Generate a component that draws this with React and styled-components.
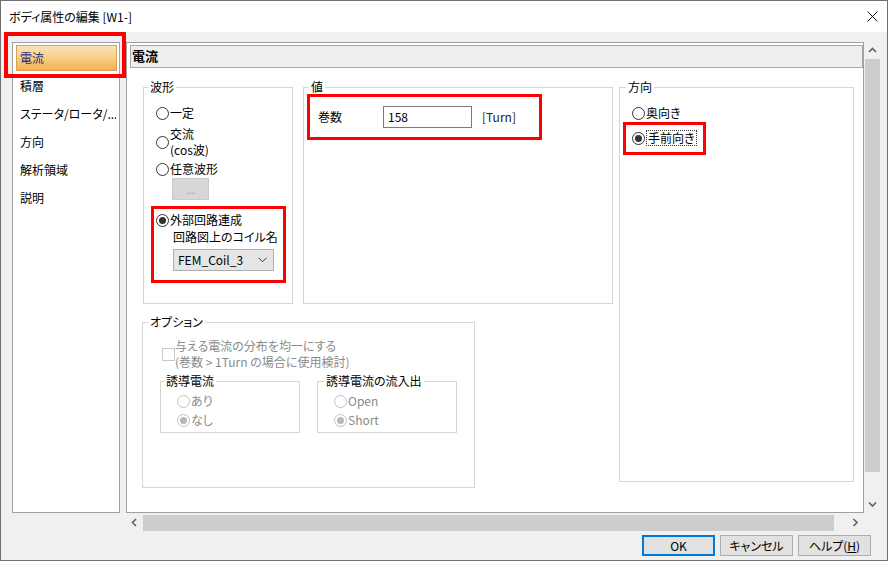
import React from 'react';
import styled, { createGlobalStyle } from 'styled-components';

const FONT = `"Noto Sans CJK JP", "Noto Sans", sans-serif`;

const Global = createGlobalStyle`
  html, body { margin: 0; padding: 0; background: #f0f0f0; }
  body {
    font-family: ${FONT};
    font-size: 12px;
    color: #000;
    font-feature-settings: "palt";
  }
  * { box-sizing: border-box; }
`;

const Window = styled.div`
  position: relative;
  width: 888px;
  height: 561px;
  border: 1px solid #707070;
  background: #f0f0f0;
  display: flex;
  flex-direction: column;
  overflow: hidden;
`;

const TitleBar = styled.div`
  height: 31px;
  background: #fff;
  display: flex;
  align-items: center;
  justify-content: space-between;
  padding-left: 8px;
  flex-shrink: 0;
`;

const TitleText = styled.span`
  font-size: 12px;
  line-height: 16px;
`;

const CloseGlyph = styled.span`
  display: flex;
  margin-right: 9px;
`;

const Body = styled.div`
  flex: 1;
  display: flex;
  flex-direction: column;
  padding: 10px 6px 4px 11px;
`;

const MainRow = styled.div`
  display: flex;
  gap: 6px;
`;

const Sidebar = styled.div`
  width: 108px;
  height: 471px;
  background: #fff;
  border: 1px solid #a0a0a0;
  padding: 2px 2px 0 3px;
  display: flex;
  flex-direction: column;
  gap: 2px;
`;

const SideItem = styled.div`
  height: 26px;
  line-height: 24px;
  padding-left: 3px;
  white-space: nowrap;
  overflow: hidden;
  border: 1px solid ${p => (p.$active ? '#d2a45c' : 'transparent')};
  background: ${p =>
    p.$active
      ? 'linear-gradient(to bottom, #fbe2b6 0%, #f9d394 40%, #f6bf66 75%, #f4b455 100%)'
      : 'transparent'};
  color: ${p => (p.$active ? '#1c2b78' : '#000')};
`;

const Annotation = styled.div`
  position: absolute;
  left: 3px;
  top: 31px;
  width: 122px;
  height: 46px;
  border: 4px solid #ff0000;
  pointer-events: none;
`;

const ScrollArea = styled.div`
  display: grid;
  grid-template-columns: 738px 17px;
  grid-template-rows: 471px 17px;
  row-gap: 1px;
`;

const Panel = styled.div`
  background: #fff;
  border: 1px solid #a0a0a0;
  display: flex;
  flex-direction: column;
  overflow: hidden;
`;

const HeaderBar = styled.div`
  margin: 2px 0 0 3px;
  height: 23px;
  border: 1px solid #a4aaaa;
  background: #eeeeee;
  font-weight: bold;
  font-size: 13px;
  line-height: 20px;
  padding-left: 1px;
`;

const Content = styled.div`
  display: flex;
  align-items: flex-start;
  padding: 11px 0 0 16px;
`;

const LeftColumn = styled.div`
  display: flex;
  flex-direction: column;
`;

const TopRow = styled.div`
  display: flex;
  gap: 10px;
`;

const GroupBox = styled.fieldset`
  margin: ${p => p.$m || '0'};
  padding: 0;
  min-width: 0;
  width: ${p => p.$w}px;
  height: ${p => p.$h}px;
  border: 1px solid #d6d6d6;
`;

const Legend = styled.legend`
  margin-left: ${p => (p.$ml != null ? p.$ml : 5)}px;
  padding: 0 2px;
  font-size: 12px;
  line-height: 16px;
  color: #000;
`;

const GroupInner = styled.div`
  display: flex;
  flex-direction: column;
  align-items: flex-start;
  padding: ${p => p.$pad};
`;

const RadioRow = styled.div`
  display: flex;
  align-items: center;
  line-height: ${p => p.$lh || 14}px;
  margin-left: ${p => p.$ml || 0}px;
  margin-top: ${p => p.$mt || 0}px;
  color: ${p => (p.$disabled ? '#8a8a8a' : '#000')};
  white-space: nowrap;
`;

const RadioCircle = styled.span`
  width: 13px;
  height: 13px;
  border-radius: 50%;
  border: 1px solid ${p => (p.$disabled ? '#c2c2c2' : '#333')};
  background: #fff;
  display: flex;
  align-items: center;
  justify-content: center;
  flex-shrink: 0;
  margin-right: 1px;
`;

const RadioDot = styled.span`
  width: 7px;
  height: 7px;
  border-radius: 50%;
  background: ${p => (p.$disabled ? '#b8b8b8' : '#333')};
`;

const Radio = ({ checked, disabled }) => (
  <RadioCircle $disabled={disabled}>
    {checked && <RadioDot $disabled={disabled} />}
  </RadioCircle>
);

const FocusLabel = styled.span`
  border: 1px dotted #333;
  padding: 0 1px;
  line-height: 14px;
`;

const EllipsisButton = styled.div`
  width: 37px;
  height: 22px;
  margin: 2px 0 0 21px;
  background: #d7d7d7;
  border: 1px solid #cbcbcb;
  color: #9a9a9a;
  text-align: center;
  line-height: 20px;
  font-size: 11px;
`;

const RedBox = styled.div`
  border: 3px solid #ff0000;
  display: flex;
  flex-direction: ${p => p.$dir || 'column'};
  align-items: ${p => p.$align || 'flex-start'};
  width: ${p => (p.$w ? `${p.$w}px` : 'auto')};
  height: ${p => (p.$h ? `${p.$h}px` : 'auto')};
  margin-top: ${p => p.$mt || 0}px;
  padding: ${p => p.$pad};
`;

const PlainText = styled.div`
  line-height: 14px;
  margin: ${p => p.$m || '0'};
`;

const Combo = styled.div`
  width: 101px;
  height: 22px;
  margin: 5px 0 0 17px;
  background: #e5e5e5;
  border: 1px solid #adadad;
  display: flex;
  align-items: center;
  justify-content: space-between;
  padding: 0 6px 0 4px;
  line-height: 20px;
`;

const FieldLabel = styled.span`
  width: 65px;
  line-height: 14px;
`;

const TextField = styled.div`
  width: 89px;
  height: 22px;
  border: 1px solid #7a7a7a;
  background: #fff;
  padding-left: 4px;
  line-height: 20px;
`;

const UnitText = styled.span`
  margin-left: 10px;
  color: #222;
  line-height: 14px;
`;

const CheckRow = styled.div`
  display: flex;
  align-items: center;
  margin-left: 2px;
  color: #8a8a8a;
`;

const CheckBox = styled.span`
  width: 13px;
  height: 13px;
  border: 1px solid #c8c8c8;
  background: #fff;
  flex-shrink: 0;
`;

const CheckText = styled.div`
  line-height: 16px;
`;

const SubRow = styled.div`
  display: flex;
  gap: 17px;
  margin-top: 3px;
`;

const VScroll = styled.div`
  background: #f0f0f0;
  display: flex;
  flex-direction: column;
  align-items: center;
`;

const HScroll = styled.div`
  background: #f0f0f0;
  display: flex;
  align-items: center;
`;

const ArrowCell = styled.div`
  width: 17px;
  height: 17px;
  display: flex;
  align-items: center;
  justify-content: center;
  flex-shrink: 0;
  margin-top: ${p => (p.$end ? 'auto' : '0')};
  margin-left: ${p => (p.$endH ? 'auto' : '0')};
`;

const Thumb = styled.div`
  background: #cdcdcd;
  width: ${p => p.$w}px;
  height: ${p => p.$h}px;
`;

const ButtonRow = styled.div`
  display: flex;
  justify-content: flex-end;
  gap: 5px;
  margin-top: 4px;
  padding-right: 10px;
`;

const DialogButton = styled.div`
  width: 73px;
  height: 21px;
  background: #e1e1e1;
  border: ${p => (p.$default ? '2px solid #0078d7' : '1px solid #adadad')};
  display: flex;
  align-items: center;
  justify-content: center;
  font-size: 12px;
  line-height: 14px;
`;

const Chevron = ({ dir }) => {
  const paths = {
    up: 'M1 5 L4.5 1.5 L8 5',
    down: 'M1 1.5 L4.5 5 L8 1.5',
    left: 'M5 1 L1.5 4.5 L5 8',
    right: 'M1.5 1 L5 4.5 L1.5 8',
  };
  const horiz = dir === 'left' || dir === 'right';
  return (
    <svg width={horiz ? 7 : 9} height={horiz ? 9 : 7} viewBox={horiz ? '0 0 7 9' : '0 0 9 7'}>
      <path d={paths[dir]} fill="none" stroke="#606060" strokeWidth="1.6" />
    </svg>
  );
};

const sideItems = ['電流', '積層', 'ステータ/ロータ/...', '方向', '解析領域', '説明'];

export default function App() {
  return (
    <>
      <Global />
      <Window>
        <TitleBar>
          <TitleText>ボディ属性の編集 [W1-]</TitleText>
          <CloseGlyph>
            <svg width="11" height="11" viewBox="0 0 11 11">
              <path d="M0.5 0.5 L10.5 10.5 M10.5 0.5 L0.5 10.5" stroke="#111" strokeWidth="1" />
            </svg>
          </CloseGlyph>
        </TitleBar>
        <Body>
          <MainRow>
            <Sidebar>
              {sideItems.map((t, i) => (
                <SideItem key={t} $active={i === 0}>{t}</SideItem>
              ))}
            </Sidebar>
            <ScrollArea>
              <Panel>
                <HeaderBar>電流</HeaderBar>
                <Content>
                  <LeftColumn>
                    <TopRow>
                      <GroupBox $w={150} $h={225}>
                        <Legend $ml={4}>波形</Legend>
                        <GroupInner $pad="11px 7px 0 7px">
                          <RadioRow $ml={5}><Radio /><span>一定</span></RadioRow>
                          <RadioRow $ml={5} $mt={6} $lh={16}>
                            <Radio />
                            <span>交流<br />(cos波)</span>
                          </RadioRow>
                          <RadioRow $ml={5} $mt={4}><Radio /><span>任意波形</span></RadioRow>
                          <EllipsisButton>...</EllipsisButton>
                          <RedBox $w={135} $h={77} $mt={6} $pad="4px 0 0 2px">
                            <RadioRow><Radio checked /><span>外部回路連成</span></RadioRow>
                            <PlainText $m="3px 0 0 17px">回路図上のコイル名</PlainText>
                            <Combo>
                              <span>FEM_Coil_3</span>
                              <svg width="9" height="6" viewBox="0 0 9 6">
                                <path d="M0.5 0.8 L4.5 4.8 L8.5 0.8" fill="none" stroke="#333" strokeWidth="1" />
                              </svg>
                            </Combo>
                          </RedBox>
                        </GroupInner>
                      </GroupBox>
                      <GroupBox $w={310} $h={225}>
                        <Legend>値</Legend>
                        <GroupInner $pad="0 0 0 3px">
                          <RedBox $dir="row" $align="center" $w={235} $h={46} $mt={-1} $pad="0 0 0 8px">
                            <FieldLabel>巻数</FieldLabel>
                            <TextField>158</TextField>
                            <UnitText>[Turn]</UnitText>
                          </RedBox>
                        </GroupInner>
                      </GroupBox>
                    </TopRow>
                    <GroupBox $w={333} $h={174} $m="10px 0 0 -1px">
                      <Legend>オプション</Legend>
                      <GroupInner $pad="8px 0 0 17px">
                        <CheckRow>
                          <CheckBox />
                          <CheckText>
                            与える電流の分布を均一にする<br />
                            (巻数 &gt; 1Turn の場合に使用検討)
                          </CheckText>
                        </CheckRow>
                        <SubRow>
                          <GroupBox $w={140} $h={60}>
                            <Legend $ml={3}>誘導電流</Legend>
                            <GroupInner $pad="5px 0 0 0">
                              <RadioRow $ml={16} $disabled><Radio disabled /><span>あり</span></RadioRow>
                              <RadioRow $ml={16} $mt={5} $disabled><Radio disabled checked /><span>なし</span></RadioRow>
                            </GroupInner>
                          </GroupBox>
                          <GroupBox $w={140} $h={60}>
                            <Legend $ml={6}>誘導電流の流入出</Legend>
                            <GroupInner $pad="5px 0 0 0">
                              <RadioRow $ml={16} $disabled><Radio disabled /><span>Open</span></RadioRow>
                              <RadioRow $ml={16} $mt={5} $disabled><Radio disabled checked /><span>Short</span></RadioRow>
                            </GroupInner>
                          </GroupBox>
                        </SubRow>
                      </GroupInner>
                    </GroupBox>
                  </LeftColumn>
                  <GroupBox $w={235} $h={403} $m="0 0 0 6px">
                    <Legend $ml={6}>方向</Legend>
                    <GroupInner $pad="11px 0 0 3px">
                      <RadioRow $ml={9}><Radio /><span>奥向き</span></RadioRow>
                      <RedBox $dir="row" $align="center" $mt={2} $pad="5px 6px 6px 6px">
                        <RadioRow><Radio checked /><FocusLabel>手前向き</FocusLabel></RadioRow>
                      </RedBox>
                    </GroupInner>
                  </GroupBox>
                </Content>
              </Panel>
              <VScroll>
                <ArrowCell><Chevron dir="up" /></ArrowCell>
                <Thumb $w={15} $h={413} />
                <ArrowCell $end><Chevron dir="down" /></ArrowCell>
              </VScroll>
              <HScroll>
                <ArrowCell><Chevron dir="left" /></ArrowCell>
                <Thumb $w={691} $h={16} />
                <ArrowCell $endH><Chevron dir="right" /></ArrowCell>
              </HScroll>
              <div />
            </ScrollArea>
          </MainRow>
          <ButtonRow>
            <DialogButton $default>OK</DialogButton>
            <DialogButton>キャンセル</DialogButton>
            <DialogButton>ヘルプ(<u>H</u>)</DialogButton>
          </ButtonRow>
        </Body>
        <Annotation />
      </Window>
    </>
  );
}
